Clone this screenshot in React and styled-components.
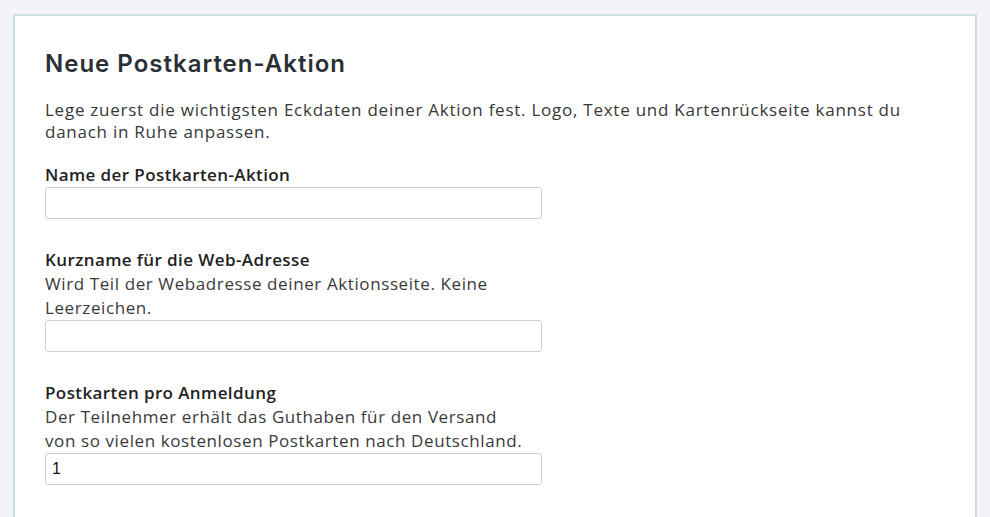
import React from "react";
import styled, { createGlobalStyle } from "styled-components";

const GlobalStyle = createGlobalStyle`
    html, body {
        margin:0;
        padding:0;
        overflow:hidden;
        background:#f3f3f8;
    }
    body {
        font-family:"Open Sans", "Liberation Sans", sans-serif;
        color:#333;
    }
    * { box-sizing:border-box; }
`;

const Page = styled.div`
    padding:14px 13px 0 13px;
`;

const Card = styled.section`
    background:#fff;
    border:2px solid #cae0e2;
    padding:33px 30px 40px 30px;
`;

const Title = styled.h1`
    margin:0;
    font-family:Inter, "Liberation Sans", sans-serif;
    font-weight:600;
    font-size:24px;
    letter-spacing:1px;
    line-height:29px;
    color:#2b3036;
`;

const Intro = styled.p`
    margin:21px 0 20px 0;
    font-size:17px;
    letter-spacing:0.75px;
    line-height:22px;
    color:#383838;
`;

const Field = styled.div`
    width:497px;
    margin-bottom:30px;
    &:nth-of-type(n+2) { margin-top:-1px; }
`;

const Label = styled.label`
    display:block;
    font-size:17px;
    letter-spacing:0.4px;
    line-height:24px;
    font-weight:600;
    color:#222;
`;

const Help = styled.div`
    max-width:486px;
    font-size:17px;
    letter-spacing:0.6px;
    line-height:24px;
    color:#3a3a3a;
`;

const Input = styled.input`
    display:block;
    width:100%;
    height:32px;
    margin:0;
    padding:0 6px;
    border:1px solid #cfcfcf;
    border-radius:3px;
    background:#fff;
    font-family:"Liberation Sans", Arial, sans-serif;
    font-size:16px;
    color:#111;
    outline:none;
`;

const fields = [
    { id:"name", label:"Name der Postkarten-Aktion" },
    { id:"slug", label:"Kurzname für die Web-Adresse", help:"Wird Teil der Webadresse deiner Aktionsseite. Keine Leerzeichen." },
    { id:"count", label:"Postkarten pro Anmeldung", help:"Der Teilnehmer erhält das Guthaben für den Versand von so vielen kostenlosen Postkarten nach Deutschland.", value:"1" },
];

function App(){
    return(
        <Page>
            <GlobalStyle />
            <Card>
                <Title>Neue Postkarten-Aktion</Title>
                <Intro>
                    Lege zuerst die wichtigsten Eckdaten deiner Aktion fest. Logo, Texte und Kartenrückseite kannst du danach in Ruhe anpassen.
                </Intro>
                {fields.map(f => (
                    <Field key={f.id}>
                        <Label htmlFor={f.id}>{f.label}</Label>
                        {f.help && <Help>{f.help}</Help>}
                        <Input id={f.id} type="text" defaultValue={f.value || ""} />
                    </Field>
                ))}
            </Card>
        </Page>
    );
}

export default App;
